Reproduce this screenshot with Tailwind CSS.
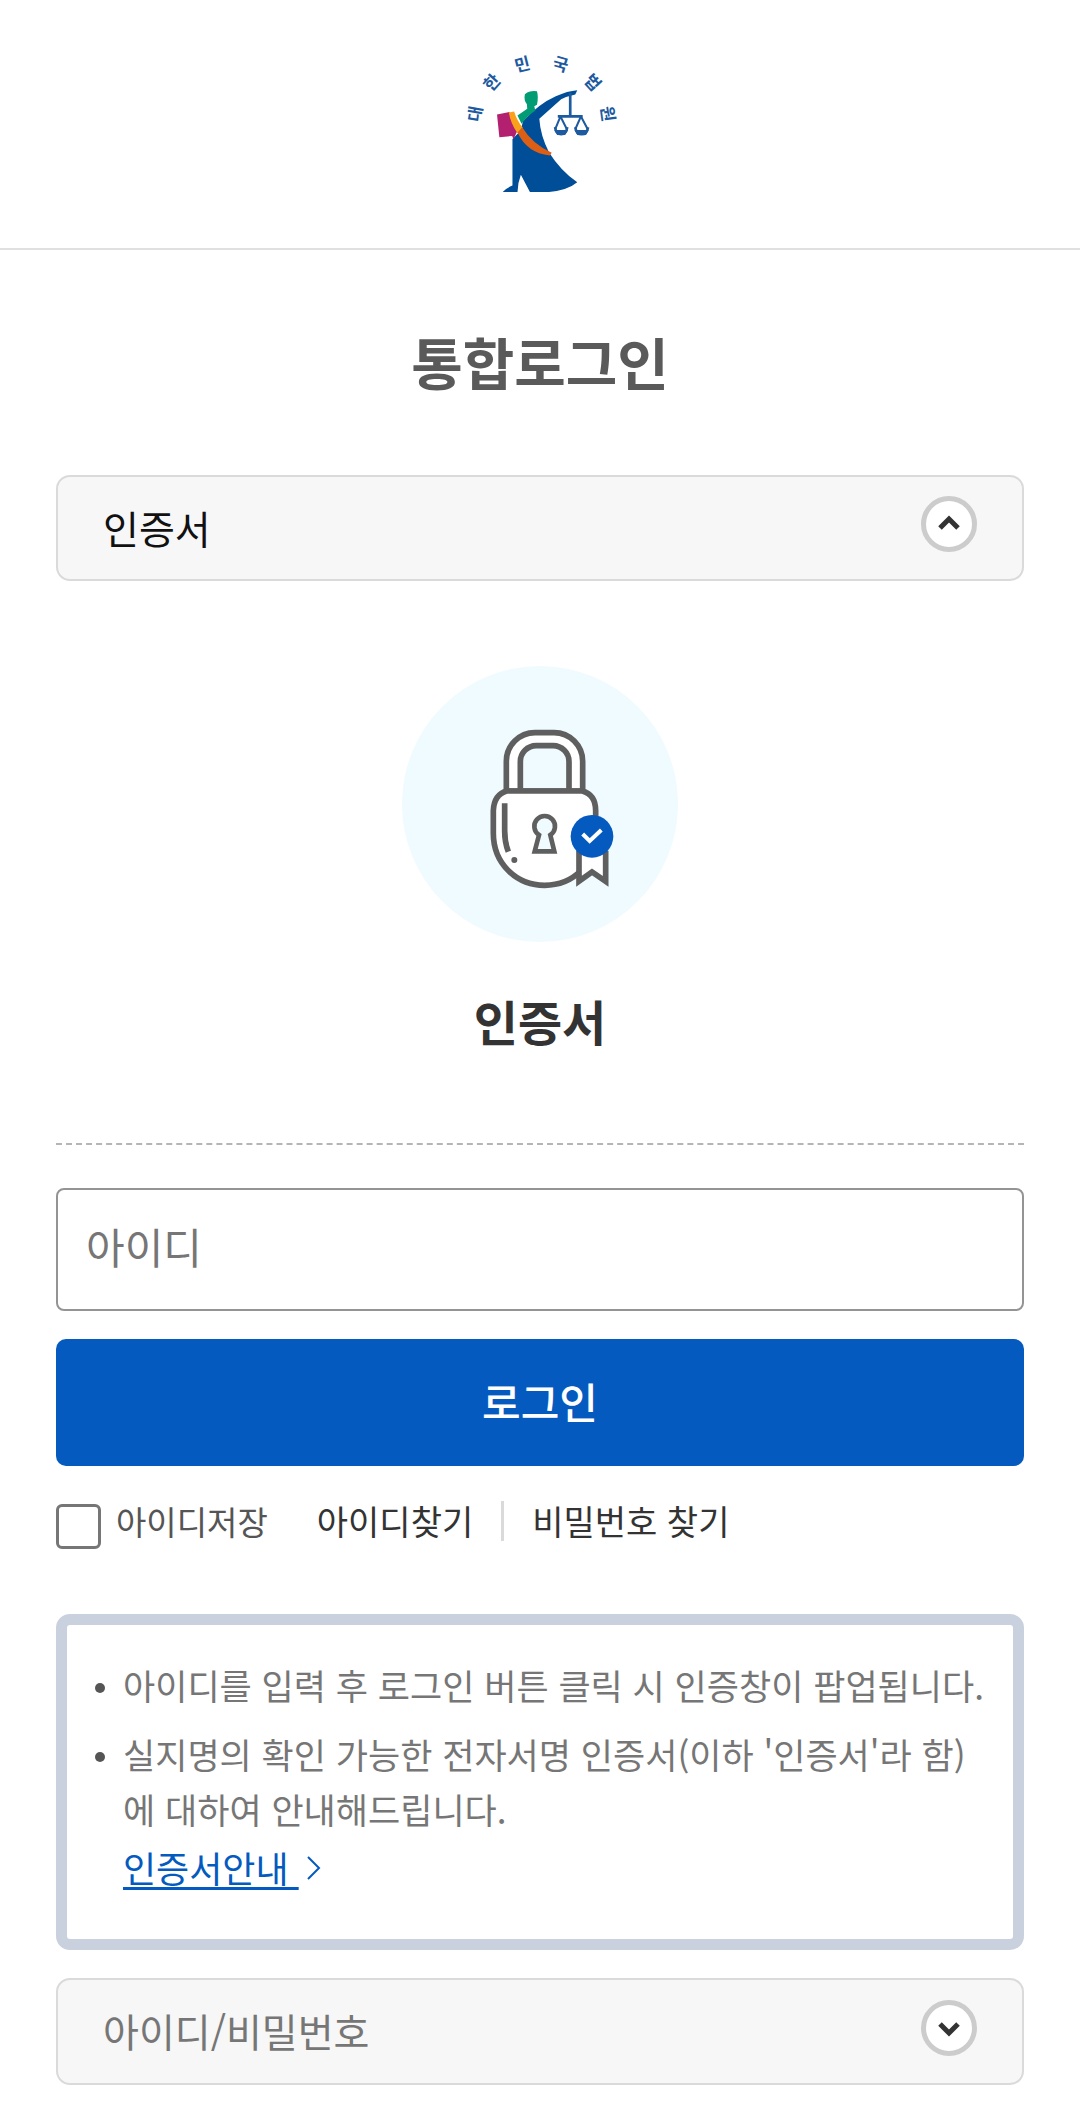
<!DOCTYPE html>
<html lang="ko">

<head>
    <meta charset="UTF-8">
    <meta name="viewport" content="width=device-width, initial-scale=1.0">
    <title>통합로그인</title>
    <script src="https://cdn.jsdelivr.net/npm/@tailwindcss/browser@4"></script>
</head>

<body class="bg-white font-['Noto_Sans_CJK_KR','Noto_Sans',sans-serif] text-[#555555]">
    <!-- Header -->
    <header class="flex justify-center border-b-2 border-[#e0e0e0] py-14">
        <a href="/" aria-label="대한민국법원">
            <svg class="block h-[136px] w-[150px] overflow-visible" viewBox="80 78 446 405">
                <g fill="#1d5a9f" font-size="50" font-weight="700" text-anchor="middle">
                    <text transform="translate(110 250) rotate(-80)" y="18">대</text>
                    <text transform="translate(160 157) rotate(-48)" y="18">한</text>
                    <text transform="translate(250 103) rotate(-14)" y="18">민</text>
                    <text transform="translate(364 103) rotate(16)" y="18">국</text>
                    <text transform="translate(460 157) rotate(48)" y="18">법</text>
                    <text transform="translate(505 250) rotate(82)" y="18">원</text>
                </g>
                <!-- Robe -->
                <path fill="#004e98" d="M246 300 L252 272 Q300 220 350 198 Q385 182 414 180 L408 193 Q385 198 366 207 L301 265 Q304 315 330 365 Q365 420 414 454 Q385 478 330 483 H273 L246 432 Q237 455 236 483 H192 Q200 472 221 464 V325 Z" />
                <!-- Head -->
                <path fill="#019b74" d="M258 192 Q272 180 294 183 Q299 200 294 223 L286 228 L289 240 Q265 256 248 280 L236 255 L265 235 L264 222 Q254 210 258 192 Z" />
                <!-- Book -->
                <path fill="#b3206f" d="M175 252 L212 245 L236 300 L224 326 L220 316 L182 320 Z" />
                <path fill="#f9a11b" d="M210 246 L226 243 Q234 270 252 292 L236 308 Q216 280 210 246 Z" />
                <path fill="#dd5f16" d="M236 306 L250 290 Q280 340 338 366 L332 374 Q265 368 236 306 Z" />
                <!-- Scales -->
                <g fill="none" stroke="#1d5a9f" stroke-width="8">
                    <path d="M393 188V257M356 258H430" />
                    <path d="M364 258L349 294M364 258L382 294M425 258L409 294M425 258L444 294" stroke-width="6" />
                    <path d="M348 290Q350 311 366 311Q382 311 384 290M408 290Q411 311 427 311Q443 311 446 290" />
                </g>
                <path fill="#1d5a9f" d="M346 298H386L378 313H354ZM406 298H448L440 313H414Z" />
            </svg>
        </a>
    </header>

    <main class="px-14 pb-7">
        <h1 class="pt-[71px] pb-[74px] text-center text-[56px] leading-[80px] font-bold text-[#5a5a5a]">통합로그인</h1>

        <!-- Certificate login -->
        <button type="button" aria-expanded="true"
            class="flex h-[106px] w-full items-center justify-between rounded-[14px] border-2 border-[#dadada] bg-[#f7f7f7] px-[45px] text-[39px] text-[#111111]">
            <span class="pb-[2px]">인증서</span>
            <span class="mb-2 flex size-14 items-center justify-center rounded-full border-5 border-[#cccccc] bg-white">
                <svg class="size-7" viewBox="0 0 28 28" fill="none" stroke="#333333" stroke-width="5">
                    <path d="M5 18L14 9L23 18" />
                </svg>
            </span>
        </button>

        <a href="#cert" class="mt-[85px] flex flex-col items-center">
            <svg class="size-[276px]" viewBox="36 46 828 828" fill="none" stroke="#5f5f5f" stroke-width="17">
                <circle cx="450" cy="460" r="414" fill="#effbfe" stroke="none" />
                <path d="M349 421V332A86 86 0 0 1 435 246H492A86 86 0 0 1 578 332V421Z" fill="#ffffff" />
                <path d="M391 421V333A48 48 0 0 1 439 285H489A48 48 0 0 1 537 333V421Z" fill="#effbfe" />
                <path d="M350 421H577Q617 432 617 480V548C617 640 550 704 464 704C380 704 310 640 310 548V480Q312 432 350 421Z" fill="#ffffff" />
                <path d="M344 458V540Q344 575 355 603" />
                <circle cx="373" cy="628" r="9" fill="#5f5f5f" stroke="none" />
                <path d="M447 553A31 31 0 1 1 481 553L493 602H434L447 553Z" fill="#effbfe" stroke-width="14" />
                <path d="M567 600V692L606 664L647 692V600" fill="#ffffff" />
                <circle cx="606" cy="557" r="64" fill="#045abe" stroke="none" />
                <path d="M578 550L599 571L634 538" stroke="#ffffff" stroke-width="12" />
            </svg>
            <span class="mt-[42px] text-[48px] leading-[72px] font-bold text-[#333333]">인증서</span>
        </a>

        <form class="mt-[87px] border-t-2 border-dashed border-[#b5b5b5] pt-[43px]">
            <label for="userId" class="sr-only">아이디</label>
            <input id="userId" type="text" placeholder="아이디"
                class="block h-[123px] w-full rounded-lg border-2 border-[#949494] px-7 pb-2 text-[42px] text-[#333333] placeholder:text-[#767676]">
            <button type="submit"
                class="mt-7 h-[127px] w-full rounded-[10px] bg-[#045abe] pb-1 text-[42px] font-medium text-white">로그인</button>

            <div class="mt-[38px] flex h-[45px] items-center text-[34px]">
                <input id="saveId" type="checkbox"
                    class="size-[45px] appearance-none rounded-md border-3 border-[#767676] bg-white checked:bg-[#045abe]">
                <label for="saveId" class="mb-3 ml-[15px] text-[33px] leading-[50px]">아이디저장</label>
                <a href="#find-id" class="mb-3 ml-[49px] leading-[50px] text-[#333333]">아이디찾기</a>
                <span class="mb-3 ml-7 h-10 border-l-3 border-[#dadada]"></span>
                <a href="#find-pw" class="mb-3 ml-7 leading-[50px] text-[#333333]">비밀번호 찾기</a>
            </div>
        </form>

        <!-- Notice -->
        <div class="mt-[65px] h-[336px] rounded-[14px] border-11 border-[#c9d1de] pt-8 pr-6 pl-7">
            <ul class="space-y-[14px] text-[35px] leading-[55px] text-[#767676]">
                <li class="flex gap-[18px]">
                    <span class="mt-[26px] size-[10px] shrink-0 rounded-full bg-[#555555]"></span>
                    <p>아이디를 입력 후 로그인 버튼 클릭 시 인증창이 팝업됩니다.</p>
                </li>
                <li class="flex gap-[18px]">
                    <span class="mt-[26px] size-[10px] shrink-0 rounded-full bg-[#555555]"></span>
                    <div>
                        <p>실지명의 확인 가능한 전자서명 인증서(이하 '인증서'라 함)<br>에 대하여 안내해드립니다.</p>
                        <a href="#guide" class="mt-1 flex items-center text-[36px] text-[#045abe]">
                            <span class="whitespace-pre underline decoration-3 underline-offset-4 [text-decoration-skip-ink:none]">인증서안내 </span>
                            <svg class="ml-2 h-6 w-[14px]" viewBox="0 0 14 24" fill="none" stroke="currentColor" stroke-width="2">
                                <path d="M1 1L12 12L1 23" />
                            </svg>
                        </a>
                    </div>
                </li>
            </ul>
        </div>

        <!-- ID / password login -->
        <button type="button" aria-expanded="false"
            class="mt-7 flex h-[107px] w-full items-center justify-between rounded-[14px] border-2 border-[#dadada] bg-[#f7f7f7] px-[45px] text-[39px] text-[#767676]">
            <span class="pb-[2px]">아이디/비밀번호</span>
            <span class="mb-2 flex size-14 items-center justify-center rounded-full border-5 border-[#cccccc] bg-white">
                <svg class="size-7" viewBox="0 0 28 28" fill="none" stroke="#333333" stroke-width="5">
                    <path d="M5 10L14 19L23 10" />
                </svg>
            </span>
        </button>
    </main>
</body>

</html>
